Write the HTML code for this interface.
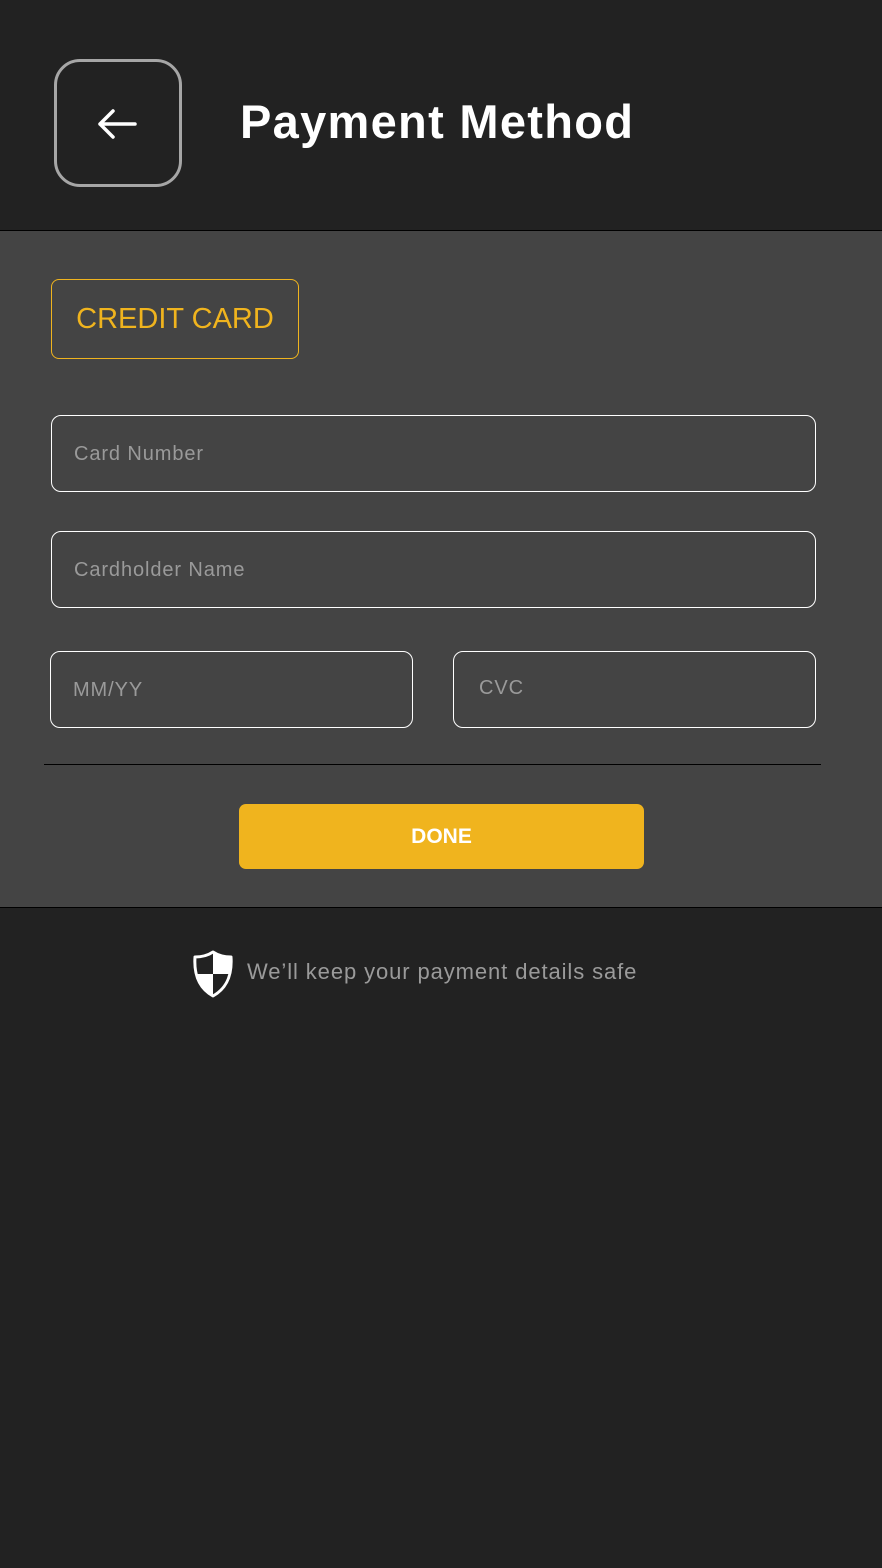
<!DOCTYPE html>
<html><head><meta charset="utf-8"><style>
html,body{margin:0;padding:0;width:882px;height:1568px;background:#222;overflow:hidden;font-family:"Liberation Sans",sans-serif}
.a{position:absolute}
.hdr{left:0;top:0;width:882px;height:230px;background:#222;border-bottom:1px solid #000}
.back{left:54px;top:59px;width:122px;height:122px;border:3px solid #a6a6a6;border-radius:26px;box-sizing:content-box}
.title{left:240px;top:94px;color:#fff;font-weight:bold;font-size:47px;letter-spacing:1.3px;white-space:nowrap}
.main{left:0;top:231px;width:882px;height:676px;background:#444;border-bottom:1px solid #000}
.cc{left:51px;top:279px;width:246px;height:78px;border:1px solid #f0b41e;border-radius:8px;color:#f0b41e;font-size:29px;line-height:78px;text-align:center;letter-spacing:0px}
.in{border:1px solid #fff;border-radius:10px;color:#9a9a9a;font-size:20px;letter-spacing:0.9px;box-sizing:border-box;padding-left:22px;line-height:76px}
.line{left:44px;top:764px;width:777px;height:1px;background:#000}
.done{left:239px;top:804px;width:405px;height:65px;background:#f0b41e;border-radius:7px;color:#fff;font-weight:bold;font-size:21px;line-height:65px;text-align:center}
.safe{left:247px;top:959px;color:#9a9a9a;font-size:22px;letter-spacing:0.9px;white-space:nowrap}
</style></head><body>
<div class="a hdr"></div>
<div class="a back"><svg width="122" height="122" viewBox="0 0 122 122"><path d="M43 62 H78 M56 49 L43 62 L56 75" stroke="#fff" stroke-width="3.5" fill="none" stroke-linecap="round" stroke-linejoin="round"/></svg></div>
<div class="a title">Payment Method</div>
<div class="a main"></div>
<div class="a cc">CREDIT CARD</div>
<div class="a in" style="left:51px;top:415px;width:765px;height:77px">Card Number</div>
<div class="a in" style="left:51px;top:531px;width:765px;height:77px">Cardholder Name</div>
<div class="a in" style="left:50px;top:651px;width:363px;height:77px">MM/YY</div>
<div class="a in" style="left:453px;top:651px;width:363px;height:77px;padding-left:25px;line-height:72px">CVC</div>
<div class="a line"></div>
<div class="a done">DONE</div>
<svg class="a" style="left:192px;top:950px" width="42" height="48" viewBox="0 0 42 48">
<path d="M21 2 C15 6 9 7 3 7 C2 22 5 37 21 46 C37 37 40 22 39 7 C33 7 27 6 21 2 Z" fill="none" stroke="#fff" stroke-width="3" stroke-linejoin="round"/>
<path d="M21 2 C27 6 33 7 39 7 C39.5 14 39 19 38 24 L21 24 Z" fill="#fff"/>
<path d="M21 24 L4 24 C6 33 11 40 21 46 Z" fill="#fff"/>
</svg>
<div class="a safe">We’ll keep your payment details safe</div>
</body></html>
